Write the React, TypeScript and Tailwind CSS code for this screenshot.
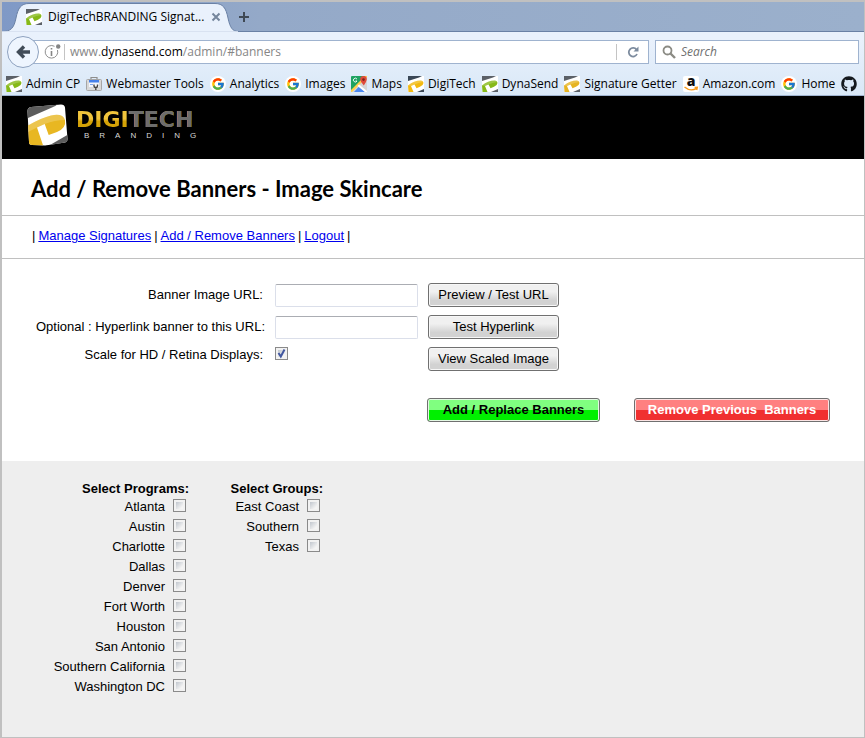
import { ReactNode } from "react";
import { FcGoogle } from "react-icons/fc";
import { FaGithub } from "react-icons/fa";

const PROGRAMS = [
  "Atlanta",
  "Austin",
  "Charlotte",
  "Dallas",
  "Denver",
  "Fort Worth",
  "Houston",
  "San Antonio",
  "Southern California",
  "Washington DC",
];

const GROUPS = ["East Coast", "Southern", "Texas"];

function BrandMark({ accent, corner, className }: { accent: string; corner: string; className: string }) {
  return (
    <svg viewBox="0 0 41 42" preserveAspectRatio="none" className={className} aria-hidden="true">
      <path d="M4 3 L34 0.500 Q37.500 0.500 38 3.500 L40.500 35 Q40.500 38 38 38.500 L18 41.500 L5 41 Q2 41 2 38 L0.500 7 Q0.500 3.500 4 3Z" fill="#fff" />
      <path d="M4 3 L30 0.800 Q29 2 25 3.500 L1 14 L0.500 7 Q0.500 3.500 4 3Z" fill={corner} />
      <path
        d="M1 21.500 Q15 13.500 24 11.500 Q36 9 38 16 Q39.500 24 30 28 L21.700 31 L17.700 20 L10 23.500 L16 41.300 L5 41 Q2 41 2 38Z"
        fill={accent}
      />
      <path d="M1 21.500 Q15 13.500 24 11.500 Q36 9 38 16 Q28 16 17.700 20 L10 23.500 L1 28Z" fill="#fff" opacity="0.2" />
      <path d="M40.300 31 L40.500 35 Q40.500 38 38 38.500 L23 41Z" fill={corner} />
    </svg>
  );
}

function Favicon({ color, corner = "#5b6067" }: { color: string; corner?: string }) {
  return (
    <svg viewBox="0 0 16 16" className="size-4 shrink-0" aria-hidden="true">
      <rect width="16" height="16" fill="#fff" />
      <path d="M0 0 H14 L11 1.500 L0 5Z" fill={corner} />
      <path d="M0 9.500 Q6 4.500 13 4.500 Q15.500 4.800 15.500 7 Q15.300 9.500 12 10.800 L8.500 12.300 L6.500 8.500 L3 10 L5.500 16 H0.500Z" fill={color} />
      <path d="M0 9.500 Q6 4.500 13 4.500 Q15 4.800 15.500 6 Q10 6.500 6.500 8.500 L3 10Z" fill="#fff" opacity="0.2" />
      <path d="M16 13 V16 H9Z" fill={corner} />
    </svg>
  );
}

function ToolsIcon() {
  return (
    <svg viewBox="0 0 16 16" className="size-4 shrink-0" aria-hidden="true">
      <path d="M5 3 V1.500 H11 V3" fill="none" stroke="#8d8d8d" strokeWidth="1.200" />
      <rect x="0.500" y="3.500" width="15" height="11" rx="1" fill="#d9d9d9" stroke="#a6a6a6" />
      <rect x="3" y="4" width="10" height="7" fill="#f3f6fc" />
      <rect x="3" y="4" width="10" height="2.500" fill="#4580ea" />
      <path d="M4 8.500 H7" stroke="#7ea5ee" />
      <path d="M8 8.500 V10 Q8 11.500 9.800 11.500 Q11.500 11.500 11.500 10 V8.500 M9.800 11.500 V14" fill="none" stroke="#444" strokeWidth="1.400" />
    </svg>
  );
}

function GoogleIcon() {
  return (
    <span className="flex size-4 shrink-0 items-center justify-center rounded-full bg-white">
      <FcGoogle className="size-[14px]" />
    </span>
  );
}

function MapsIcon() {
  return (
    <svg viewBox="0 0 16 16" className="size-4 shrink-0" aria-hidden="true">
      <rect width="16" height="16" rx="1" fill="#1ea362" />
      <path d="M0 16 L16 0 V16Z" fill="#d5d5d5" />
      <path d="M0 14 L14 0 H16 L16 1 L1 16 H0Z" fill="#ffd04b" />
      <path d="M3 16 L8 10.500 L14 16Z" fill="#4a89f3" />
      <path d="M6.500 10 L8 8.500 L16 15 V16 H14Z" fill="#fff" />
      <path d="M6 3.200 A1.900 1.900 0 1 0 6 5 H4.500" fill="none" stroke="#fff" strokeWidth="0.900" />
      <path d="M12.500 0 A3.300 3.300 0 0 1 15.800 3.500 Q15.500 6 12.800 9.500 Q9.500 6 9.200 3.500 A3.300 3.300 0 0 1 12.500 0Z" fill="#df4b3b" />
      <circle cx="12.500" cy="3.600" r="1.300" fill="#7d231b" />
    </svg>
  );
}

function AmazonIcon() {
  return (
    <svg viewBox="0 0 16 16" className="size-4 shrink-0" aria-hidden="true">
      <rect width="16" height="16" rx="2" fill="#fff" />
      <text x="8" y="9.500" textAnchor="middle" fontFamily="Open Sans, sans-serif" fontWeight="800" fontSize="14" fill="#111">
        a
      </text>
      <path d="M1.500 11 Q7.500 16 13.500 12.300 M11.600 11.400 L14.300 11.300 L13.700 14" fill="none" stroke="#f79a1c" strokeWidth="1.400" />
    </svg>
  );
}

const BOOKMARKS: { label: string; icon: ReactNode }[] = [
  { label: "Admin CP", icon: <Favicon color="#86b918" /> },
  { label: "Webmaster Tools", icon: <ToolsIcon /> },
  { label: "Analytics", icon: <GoogleIcon /> },
  { label: "Images", icon: <GoogleIcon /> },
  { label: "Maps", icon: <MapsIcon /> },
  { label: "DigiTech", icon: <Favicon color="#f2b90f" corner="#3a4756" /> },
  { label: "DynaSend", icon: <Favicon color="#86b918" /> },
  { label: "Signature Getter", icon: <Favicon color="#e6b422" /> },
  { label: "Amazon.com", icon: <AmazonIcon /> },
  { label: "Home", icon: <GoogleIcon /> },
];

function TabStrip() {
  return (
    <div className="flex h-[30px] items-stretch border-b border-[#6a81a5] bg-linear-to-r from-[#7f99c6] via-[#94a9c8] via-30% to-[#9bb0cc]">
      <div className="relative -mb-px flex w-[236px] items-center pl-6">
        <svg viewBox="0 0 236 30" className="absolute inset-0 size-full" preserveAspectRatio="none" aria-hidden="true">
          <path
            d="M0 30 V29.500 C9 29.500 12 26 14 16 C16 6 19 1.500 27 1.500 H213 C221 1.500 224 6 226 16 C228 26 231 29.500 236 29.500 V30Z"
            fill="#e9f1fc"
            stroke="#6a81a5"
          />
          <path d="M0 30 H236" stroke="#e9f1fc" strokeWidth="1.500" />
        </svg>
        <div className="relative flex items-center gap-1.5">
          <Favicon color="#86b918" />
          <span className="whitespace-nowrap">DigiTechBRANDING Signat...</span>
          <button type="button" aria-label="Close tab" className="size-3">
            <svg viewBox="0 0 12 12" className="size-3">
              <path d="M2.500 2.500 L9.500 9.500 M9.500 2.500 L2.500 9.500" stroke="#75869c" strokeWidth="2" />
            </svg>
          </button>
        </div>
      </div>
      <button type="button" aria-label="New tab" className="flex items-center">
        <svg viewBox="0 0 12 12" className="size-3">
          <path d="M6 1 V11 M1 6 H11" stroke="#3f4955" strokeWidth="2" />
        </svg>
      </button>
    </div>
  );
}

function NavBar() {
  return (
    <div className="flex h-[40px] items-center pr-[5px] pl-[5px]">
      <button
        type="button"
        aria-label="Back"
        className="z-10 flex size-8 shrink-0 items-center justify-center rounded-full border border-[#8ea2bf] bg-[#eef5fe]"
      >
        <svg viewBox="0 0 16 16" className="size-4">
          <path d="M15 8 H4 M9 2.500 L3.500 8 L9 13.500" fill="none" stroke="#414c58" strokeWidth="3.400" />
        </svg>
      </button>
      <div className="-ml-2 flex h-6 min-w-0 flex-1 items-center border border-[#9fb3cf] bg-white pl-3">
        <svg viewBox="0 0 18 16" className="h-4 w-[18px] shrink-0" aria-hidden="true">
          <path d="M10.500 2.300 A6.300 6.300 0 1 0 13.500 6" fill="none" stroke="#8f8f8f" />
          <circle cx="14.200" cy="2.500" r="2.200" fill="#858585" />
          <path d="M7.500 4 V5.600 M7.500 7 V12" stroke="#858585" strokeWidth="1.600" />
        </svg>
        <span className="ml-0.5 h-4 w-px bg-[#c4c4c4]" />
        <span className="ml-[5px] min-w-0 flex-1 text-[#868686]">
          www.<span className="text-black">dynasend.com</span>/admin/#banners
        </span>
        <button type="button" aria-label="Reload" className="flex h-4 w-8 items-center justify-center border-l border-[#c4c4c4]">
          <svg viewBox="0 0 12 12" className="size-3">
            <path d="M9.500 3.600 A4.300 4.300 0 1 0 10 8" fill="none" stroke="#7c8b9e" strokeWidth="1.800" />
            <path d="M11.500 0.500 V5.500 H6.500Z" fill="#7c8b9e" />
          </svg>
        </button>
      </div>
      <label className="ml-1.5 flex h-6 w-[204px] shrink-0 items-center border border-[#9fb3cf] bg-white pl-1.5">
        <svg viewBox="0 0 14 14" className="size-[14px] shrink-0" aria-hidden="true">
          <circle cx="5.500" cy="5.500" r="4" fill="none" stroke="#8b8b84" strokeWidth="1.800" />
          <path d="M8.500 8.500 L13 13" stroke="#8b8b84" strokeWidth="2.400" />
        </svg>
        <input
          type="text"
          aria-label="Search"
          placeholder="Search"
          className="ml-[5px] w-full min-w-0 bg-transparent italic outline-none placeholder:text-[#6f6f6f]"
        />
      </label>
    </div>
  );
}

function BookmarksBar() {
  return (
    <div className="flex h-[24px] items-center gap-1.5 overflow-hidden border-b border-[#9fb3cf] pl-1">
      {BOOKMARKS.map((b) => (
        <a key={b.label} href="#" className="flex shrink-0 items-center gap-1 whitespace-nowrap">
          {b.icon}
          {b.label}
        </a>
      ))}
      <a href="#" aria-label="GitHub" className="shrink-0">
        <FaGithub className="size-4 text-[#15191e]" />
      </a>
    </div>
  );
}

function GreyButton({ children }: { children: ReactNode }) {
  return (
    <button
      type="button"
      className="h-6 rounded-[3px] border border-[#707070] bg-linear-to-b from-[#f0f0f0] from-35% to-[#d2d2d2] to-75% text-center whitespace-nowrap inset-ring inset-ring-[#f7f7f7]"
    >
      {children}
    </button>
  );
}

const TICK =
  "size-[13px] shrink-0 appearance-none border border-[#8a8a8a] bg-linear-to-br from-[#c3c8cf] from-20% to-[#f5f5f5] to-70% inset-ring-2 inset-ring-[#f2f2f2]";

const FIELD = "h-[23px] w-full rounded-[2px] border border-[#dbdfea] border-t-[#abadb3] bg-white px-1 outline-none";

function CheckList({ title, items, className }: { title: string; items: string[]; className: string }) {
  return (
    <fieldset className={className}>
      <legend className="ml-auto leading-4 font-bold">{title}</legend>
      <ul className="pr-[3px]">
        {items.map((item) => (
          <li key={item}>
            <label className="flex h-5 items-center justify-end gap-2">
              {item}
              <input type="checkbox" className={`${TICK} mb-1`} />
            </label>
          </li>
        ))}
      </ul>
    </fieldset>
  );
}

export default function App() {
  return (
    <div className="flex min-h-screen flex-col border-t-2 border-r border-b border-l-2 border-[#c0c0c0] bg-white font-['Liberation_Sans',Arial,sans-serif] text-[13px] leading-4 text-black">
      <div className="bg-linear-to-b from-[#e9f1fc] from-40% to-[#d9e8f7] font-['Open_Sans','Segoe_UI',sans-serif] text-[12px]">
        <TabStrip />
        <NavBar />
        <BookmarksBar />
      </div>

      <header className="flex h-[63px] items-start bg-black pt-2 pl-[25px]">
        <BrandMark accent="#e8b722" corner="#5c5c5c" className="h-[42px] w-[41px]" />
        <div className="ml-2 pt-1">
          <div className="bg-linear-to-b from-[#f0c43c] from-45% to-[#d4a206] to-55% bg-clip-text font-['DejaVu_Sans',sans-serif] text-[22px] leading-6 font-bold text-transparent">
            DIGI<span className="text-[#6d6d6d]">TECH</span>
          </div>
          <div className="pl-2 text-[8px] leading-2 tracking-[10px] text-[#d8d8d8]">BRANDING</div>
        </div>
      </header>

      <main className="flex flex-1 flex-col">
        <h1 className="border-b border-[#c0c0c0] pt-4 pb-3 pl-[29px] font-['Lato',Calibri,sans-serif] text-[22px] leading-7 font-bold">
          Add / Remove Banners - Image Skincare
        </h1>

        <nav className="flex h-[43px] items-center gap-[3px] border-b border-[#c0c0c0] pb-0.5 pl-[30px]">
          <span>|</span>
          <a href="#" className="text-[#0000ee] underline">Manage Signatures</a>
          <span>|</span>
          <a href="#" className="text-[#0000ee] underline">Add / Remove Banners</a>
          <span>|</span>
          <a href="#" className="text-[#0000ee] underline">Logout</a>
          <span>|</span>
        </nav>

        <form className="pt-6 pb-[39px]">
          <div className="grid grid-cols-[263px_143px_131px] items-center gap-x-2.5 gap-y-2">
            <label htmlFor="banner-url" className="pr-0.5 text-right">Banner Image URL:</label>
            <input id="banner-url" type="text" className={FIELD} />
            <GreyButton>Preview / Test URL</GreyButton>

            <label htmlFor="link-url" className="text-right">Optional : Hyperlink banner to this URL:</label>
            <input id="link-url" type="text" className={FIELD} />
            <GreyButton>Test Hyperlink</GreyButton>

            <label htmlFor="retina" className="self-start pr-0.5 text-right">Scale for HD / Retina Displays:</label>
            <span className="relative size-[13px] self-start">
              <input id="retina" type="checkbox" defaultChecked className={`${TICK} block`} />
              <svg viewBox="0 0 13 13" className="pointer-events-none absolute inset-0 size-[13px]" aria-hidden="true">
                <path d="M3.500 6 L5.800 9.500 L9.500 2.500" fill="none" stroke="#4157a0" strokeWidth="2" />
              </svg>
            </span>
            <GreyButton>View Scaled Image</GreyButton>
          </div>

          <div className="mt-[27px] flex gap-[34px] pl-[425px]">
            <button
              type="button"
              className="h-6 w-[173px] rounded-[3px] border border-[#707070] bg-linear-to-b from-[#80ff80] from-50% to-[#00f000] to-50% font-bold whitespace-nowrap inset-ring inset-ring-[#e4f8e4]"
            >
              Add / Replace Banners
            </button>
            <button
              type="button"
              className="h-6 w-[196px] rounded-[3px] border border-[#707070] bg-linear-to-b from-[#ff8080] from-50% to-[#f03030] to-50% font-bold whitespace-pre text-white inset-ring inset-ring-[#fbe4e4]"
            >
              {"Remove Previous  Banners"}
            </button>
          </div>
        </form>

        <section className="flex flex-1 items-start bg-[#eeeeee] pt-5 pb-8">
          <CheckList title="Select Programs:" items={PROGRAMS} className="w-[187px]" />
          <CheckList title="Select Groups:" items={GROUPS} className="w-[134px]" />
        </section>
      </main>
    </div>
  );
}
